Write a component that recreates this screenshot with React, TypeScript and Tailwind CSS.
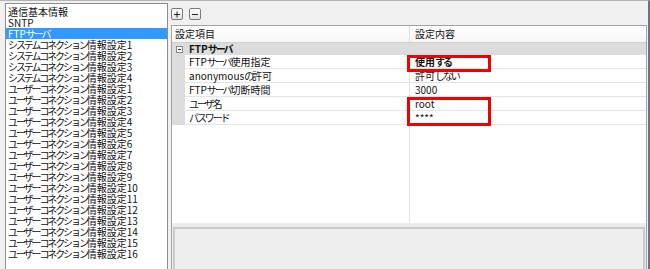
const listItems = [
  "通信基本情報",
  "SNTP",
  "FTPサーバ",
  ...[1, 2, 3, 4].map((n) => `システムコネクション情報設定${n}`),
  ...Array.from({ length: 16 }, (_, i) => `ユーザーコネクション情報設定${i + 1}`),
];

const rows = [
  { label: "FTPサーバ使用指定", value: "使用する", bold: true },
  { label: "anonymousの許可", value: "許可しない" },
  { label: "FTPサーバ切断時間", value: "3000" },
  { label: "ユーザ名", value: "root" },
  { label: "パスワード", value: "****" },
];

// kana in the old UI font are narrow, so tighten runs of kana
function Jp({ text }: { text: string }) {
  const parts = text.split(/([ぁ-んァ-ヶー]+)/);
  return (
    <>
      {parts.map((p, i) =>
        i % 2 === 1 ? (
          <span key={i} className="tracking-[-2.1px]">
            {p}
          </span>
        ) : (
          p
        )
      )}
    </>
  );
}

function ToolButton({ minus }: { minus?: boolean }) {
  return (
    <div className="w-[12px] h-[12px] rounded-[2px] border border-[#7a7a7a] bg-gradient-to-b from-white to-[#e4e4e4] flex items-center justify-center">
      <svg width="8" height="8" viewBox="0 0 8 8">
        <path d="M1 4.5h6" stroke="#222" strokeWidth="1" />
        {!minus && <path d="M4 1.5v6" stroke="#222" strokeWidth="1" />}
      </svg>
    </div>
  );
}

export default function App() {
  return (
    <div className="w-[650px] h-[269px] overflow-hidden flex bg-[#f0f0f0] border-t border-[#b4b4b4] border-r-2 border-r-[#69747f] font-['Noto_Sans_CJK_JP',sans-serif] text-[10px] text-[#111]">
      {/* left list */}
      <div className="ml-[5px] mt-[2px] w-[163px] h-[280px] shrink-0 border border-[#8d8d8d] bg-white pt-[2px]">
        {listItems.map((item, i) => (
          <div
            key={item}
            className={
              i === 2
                ? "h-[11px] leading-[11px] pl-[2px] whitespace-nowrap bg-[#3399ff] text-white"
                : "h-[11px] leading-[11px] pl-[2px] whitespace-nowrap"
            }
          >
            <Jp text={item} />
          </div>
        ))}
      </div>

      {/* right panel */}
      <div className="ml-[3px] mr-[1px] flex-1 flex flex-col">
        <div className="h-[24px] shrink-0 flex items-start gap-[6px] pt-[7px]">
          <ToolButton />
          <ToolButton minus />
        </div>

        <div className="relative border border-[#a3a3a3] bg-white flex flex-col">
          {/* header */}
          <div className="h-[17px] flex border-b border-[#cfcfcf] bg-gradient-to-b from-white to-[#f6f6f6]">
            <div className="w-[238px] border-r border-[#e2e2e2] pl-[3px] leading-[16px]">設定項目</div>
            <div className="flex-1 pl-[5px] leading-[16px]">設定内容</div>
          </div>

          {/* group */}
          <div className="h-[12px] flex items-center bg-[#dcdcdc]">
            <div className="ml-[4px] w-[7px] h-[7px] border border-[#8a8a8a] bg-white flex items-center justify-center">
              <div className="w-[3px] h-px bg-[#333]" />
            </div>
            <div className="ml-[6px] font-bold leading-[12px]">
              <Jp text="FTPサーバ" />
            </div>
          </div>

          {/* rows */}
          {rows.map((r) => (
            <div key={r.label} className="h-[14px] flex">
              <div className="w-[13px] bg-[#dcdcdc]" />
              <div className="w-[225px] border-r border-b border-[#e4e4e4] pl-[4px] leading-[13px] whitespace-nowrap">
                <Jp text={r.label} />
              </div>
              <div
                className={
                  r.bold
                    ? "flex-1 border-b border-[#e4e4e4] pl-[5px] leading-[13px] font-bold"
                    : "flex-1 border-b border-[#e4e4e4] pl-[5px] leading-[13px]"
                }
              >
                <Jp text={r.value} />
              </div>
            </div>
          ))}

          {/* empty area */}
          <div className="h-[98px] flex">
            <div className="w-[238px] border-r border-[#e4e4e4]" />
          </div>

          {/* description */}
          <div className="h-[60px] bg-[#ececec] pt-[4px] px-[1px]">
            <div className="h-full border-2 border-[#c9c9c9] bg-[#eeeeee]" />
          </div>

          {/* annotations */}
          <div className="absolute left-[235px] top-[29px] w-[84px] h-[17px] border-[3px] border-[#ee0000]" />
          <div className="absolute left-[235px] top-[71px] w-[84px] h-[29px] border-[3px] border-[#ee0000]" />
        </div>
      </div>
    </div>
  );
}
